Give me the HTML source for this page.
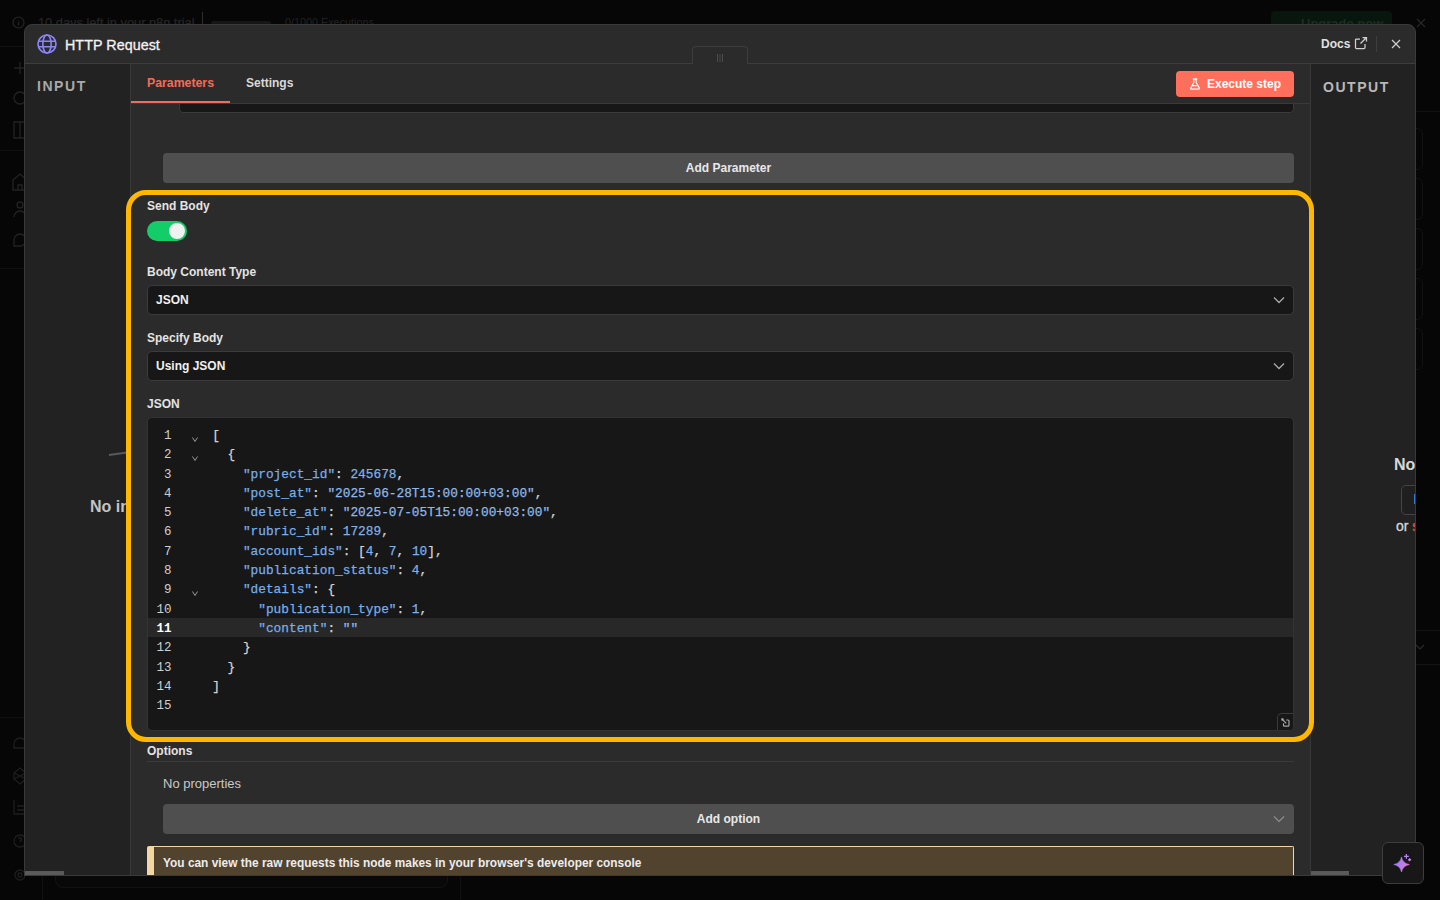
<!DOCTYPE html>
<html><head><meta charset="utf-8">
<style>
*{box-sizing:border-box;margin:0;padding:0}
html,body{width:1440px;height:900px;overflow:hidden;background:#060606;font-family:"Liberation Sans",sans-serif;color:#e8e8e8}
.a{position:absolute}
.t{position:absolute;white-space:nowrap;line-height:1}
.lbl{position:absolute;white-space:nowrap;line-height:1;font-size:12px;font-weight:bold;color:#e3e3e3}
.sel{position:absolute;background:#171717;border:1px solid #3b3b3b;border-radius:5px}
.btn{position:absolute;background:#4f4f4f;border-radius:4px}
#code{position:absolute;left:147px;top:417px;width:1147px;height:314px;background:#171717;border:1px solid #333;border-radius:5px;overflow:hidden}
.ln{position:absolute;left:0;width:23.5px;text-align:right;font-family:"Liberation Mono",monospace;font-size:12.5px;color:#cfcfcf;line-height:19.29px;white-space:pre}
.cl{position:absolute;left:64.2px;-webkit-text-stroke:0.25px currentColor;font-family:"Liberation Mono",monospace;font-size:12.8px;color:#d4d4d4;line-height:19.29px;white-space:pre}
.k{color:#78aeea}.s{color:#8fb8e8}.n{color:#7fb0e8}
.fold{position:absolute;left:44px;width:6px;height:5px}
</style></head><body>

<!-- dim background app -->
<div class="a" style="left:0;top:46px;width:25px;height:1px;background:#111"></div>
<div class="a" style="left:0;top:150px;width:25px;height:1px;background:#101010"></div>
<div class="a" style="left:0;top:268px;width:25px;height:1px;background:#0f0f0f"></div>
<div class="a" style="left:0;top:717px;width:25px;height:1px;background:#0f0f0f"></div>
<svg class="a" style="left:12px;top:16px" width="13" height="13" viewBox="0 0 13 13" fill="none" stroke="#262626" stroke-width="1.2"><circle cx="6.5" cy="6.5" r="5.5"/><path d="M6.5 6v3.5M6.5 4v.5"/></svg>
<div class="t" style="left:38px;top:17px;font-size:12.8px;color:#262626;-webkit-text-stroke:0.2px #262626">10 days left in your n8n trial</div>
<div class="a" style="left:202px;top:12px;width:1px;height:14px;background:#2e2e2e"></div>
<div class="a" style="left:211px;top:21px;width:60px;height:4px;background:#161616;border-radius:2px"></div>
<div class="t" style="left:285px;top:17px;font-size:10.8px;color:#222">0/1000 Executions</div>
<svg class="a" style="left:0;top:60px" width="25" height="200" viewBox="0 0 25 200" fill="none" stroke="#222" stroke-width="1.3"><path d="M20 2v12M14 8h12"/><circle cx="20" cy="38" r="6"/><path d="M14 62h12v16H14zM20 62v16"/><path d="M13 120l7-6 7 6v10H13zM18 130v-5h4v5"/><circle cx="20" cy="145" r="3"/><path d="M14 157a6 6 0 0 1 12 0"/><path d="M14 180a6 6 0 1 1 12 0a6 6 0 0 1-6 6h-6z"/></svg>
<svg class="a" style="left:0;top:730px" width="25" height="155" viewBox="0 0 25 155" fill="none" stroke="#1e1e1e" stroke-width="1.3"><path d="M14 14a6 6 0 1 1 12 0v4H14z"/><path d="M14 43l6-5 6 5v6l-6 5-6-5zM14 43l12 6M26 43l-12 6"/><path d="M14 70v14h12M17 76h8M17 80h8"/><circle cx="20" cy="111" r="6"/><path d="M18.5 109a1.5 1.5 0 1 1 2 1.5v1.5M20 114.5v.3"/><circle cx="20" cy="145" r="5"/><circle cx="20" cy="145" r="2"/></svg>
<div class="a" style="left:1271px;top:11px;width:121px;height:20px;background:#07170d;border-radius:4px"></div>
<div class="t" style="left:1301px;top:17px;font-size:13px;font-weight:bold;color:#17301f">Upgrade now</div>
<svg class="a" style="left:1416px;top:18px" width="10" height="10" viewBox="0 0 10 10" stroke="#262626" stroke-width="1.2"><path d="M1 1l8 8M9 1l-8 8"/></svg>
<div class="a" style="left:1416px;top:111px;width:24px;height:1px;background:#111"></div>
<div class="a" style="left:1405px;top:128px;width:18px;height:42px;border:1px solid #131313;border-radius:6px"></div>
<div class="a" style="left:1405px;top:178px;width:18px;height:42px;border:1px solid #131313;border-radius:6px"></div>
<div class="a" style="left:1405px;top:228px;width:18px;height:42px;border:1px solid #131313;border-radius:6px"></div>
<div class="a" style="left:1405px;top:278px;width:18px;height:42px;border:1px solid #131313;border-radius:6px"></div>
<div class="a" style="left:1405px;top:328px;width:18px;height:42px;border:1px solid #131313;border-radius:6px"></div>
<div class="a" style="left:1416px;top:630px;width:24px;height:1px;background:#141414"></div>
<div class="a" style="left:1416px;top:664px;width:24px;height:1px;background:#141414"></div>
<svg class="a" style="left:1415px;top:644px" width="10" height="6" viewBox="0 0 10 6" fill="none" stroke="#2a2a2a" stroke-width="1.2"><path d="M1 1l4 4 4-4"/></svg>
<div class="a" style="left:55px;top:870px;width:393px;height:18px;border:1px solid #121212;border-top:none;border-radius:0 0 8px 8px;background:#080808"></div><div class="a" style="left:42px;top:876px;width:1px;height:24px;background:#101010"></div><div class="a" style="left:460px;top:876px;width:1px;height:24px;background:#101010"></div>

<!-- modal -->
<div class="a" style="left:24px;top:24px;width:1392px;height:852px;background:#2b2b2b;border:1px solid #3a3a3a;border-radius:8px 8px 0 0"></div>
<div class="a" style="left:25px;top:63px;width:1390px;height:1px;background:#3d3d3d"></div>
<!-- header -->
<svg class="a" style="left:37px;top:34px" width="20" height="20" viewBox="0 0 20 20" fill="none" stroke="#8c85fb" stroke-width="1.6"><circle cx="10" cy="10" r="9"/><ellipse cx="10" cy="10" rx="4.2" ry="9"/><path d="M1.5 7.2h17M1.5 12.8h17"/></svg>
<div class="t" style="left:65px;top:38px;font-size:14.3px;color:#f2f2f2;-webkit-text-stroke:0.3px #f2f2f2;letter-spacing:0.05px">HTTP Request</div>
<div class="t" style="left:1321px;top:38px;font-size:12px;font-weight:bold;color:#e0e0e0">Docs</div>
<svg class="a" style="left:1354px;top:36px" width="14" height="14" viewBox="0 0 14 14" fill="none" stroke="#d0d0d0" stroke-width="1.25"><path d="M11 8v3.5a1 1 0 0 1-1 1H2.5a1 1 0 0 1-1-1V4a1 1 0 0 1 1-1H6M8.5 1.5h4v4M12.5 1.5L6.5 7.5"/></svg>
<div class="a" style="left:1376px;top:36px;width:1px;height:16px;background:#3e3e3e"></div>
<svg class="a" style="left:1391px;top:39px" width="10" height="10" viewBox="0 0 10 10" stroke="#cfcfcf" stroke-width="1.2"><path d="M1 1l8 8M9 1l-8 8"/></svg>
<div class="a" style="left:692px;top:46px;width:56px;height:18px;border:1px solid #3d3d3d;border-bottom:none;border-radius:4px 4px 0 0;background:#2b2b2b"></div>
<svg class="a" style="left:716px;top:54px" width="8" height="8" viewBox="0 0 8 8" stroke="#4c4c4c" stroke-width="1"><path d="M1.5 0v8M4 0v8M6.5 0v8"/></svg>

<!-- input panel -->
<div class="a" style="left:25px;top:64px;width:105px;height:811px;background:#222"></div>
<div class="t" style="left:37px;top:79px;font-size:14px;font-weight:bold;letter-spacing:1.55px;color:#a9a9a9">INPUT</div>
<div class="t" style="left:90px;top:499px;font-size:16px;font-weight:bold;color:#c4c4c4">No input</div>
<div class="a" style="left:109px;top:454px;width:22px;height:2px;background:#565a63;transform:rotate(-8deg);transform-origin:0 50%"></div>

<!-- output panel -->
<div class="a" style="left:1310px;top:64px;width:105px;height:811px;background:#222;border-left:1px solid #383838"></div>
<div class="t" style="left:1323px;top:80px;font-size:14px;font-weight:bold;letter-spacing:1.55px;color:#b8b8b8">OUTPUT</div>
<div class="a" style="left:1310px;top:64px;width:105px;height:811px;overflow:hidden">
  <div class="t" style="left:84px;top:393px;font-size:16px;font-weight:bold;color:#d8d8d8">No input data</div>
  <div class="a" style="left:91px;top:421px;width:40px;height:30px;border:1px solid #444;border-radius:5px;background:#1f1f1f"></div>
  <div class="a" style="left:104px;top:430px;width:2px;height:10px;background:#2a7fd1"></div>
  <div class="t" style="left:86px;top:455px;font-size:14px;color:#d8d8d8;-webkit-text-stroke:0.3px #d8d8d8">or <span style="color:#e8553f;-webkit-text-stroke:0.3px #e8553f">set mock data</span></div>
</div>
<div class="a" style="left:1311px;top:871px;width:38px;height:4px;background:#5a5a5a"></div>
<div class="a" style="left:25px;top:871px;width:39px;height:4px;background:#5a5a5a"></div>

<!-- main panel -->
<div class="a" style="left:130px;top:64px;width:1180px;height:811px;background:#2b2b2b;border-left:1px solid #383838;overflow:hidden">
</div>
<div id="mainc" class="a" style="left:131px;top:64px;width:1179px;height:811px;overflow:hidden">
  <!-- tabs -->
  <div class="t" style="left:16px;top:13px;font-size:12.3px;font-weight:bold;color:#f56b58">Parameters</div>
  <div class="t" style="left:115px;top:13px;font-size:12px;font-weight:bold;color:#d9d9d9">Settings</div>
  <div class="a" style="left:0;top:39px;width:1179px;height:1px;background:#3a3a3a"></div>
  <div class="a" style="left:0;top:37px;width:99px;height:2px;background:#f56b58"></div>
  <div class="a" style="left:1045px;top:7px;width:118px;height:26px;background:#ff6f5c;border-radius:4px"></div>
  <svg class="a" style="left:1058px;top:13px" width="12" height="13" viewBox="0 0 12 13" fill="none" stroke="#fff" stroke-width="1.1"><path d="M3.8 2.1h4.4" stroke-width="1.6"/><path d="M4.8 2.5v3L1.7 10.9a0.8 0.8 0 0 0 .7 1.2h7.2a0.8 0.8 0 0 0 .7-1.2L7.2 5.5v-3M3 8.6h6"/></svg>
  <div class="t" style="left:1076px;top:14px;font-size:12px;font-weight:bold;color:#fff">Execute step</div>
  <!-- partial input at top -->
  <div class="a" style="left:48px;top:20px;width:1115px;height:29px;background:#171717;border:1px solid #3b3b3b;border-radius:4px;clip-path:inset(20px 0 0 0)"></div>
  <!-- Add parameter -->
  <div class="btn" style="left:32px;top:89px;width:1131px;height:30px"></div>
  <div class="t" style="left:32px;top:98px;width:1131px;text-align:center;font-size:12px;font-weight:bold;color:#e8e8e8">Add Parameter</div>
</div>

<!-- highlighted section -->
<div class="lbl" style="left:147px;top:200px">Send Body</div>
<div class="a" style="left:147px;top:221px;width:40px;height:20px;border-radius:10px;background:#13cd69"></div>
<div class="a" style="left:169px;top:223px;width:16px;height:16px;border-radius:8px;background:#f1f1f1"></div>

<div class="lbl" style="left:147px;top:266px">Body Content Type</div>
<div class="sel" style="left:147px;top:285px;width:1147px;height:30px"></div>
<div class="t" style="left:156px;top:294px;font-size:12px;font-weight:bold;color:#f0f0f0">JSON</div>
<svg class="a" style="left:1273px;top:296px" width="12" height="8" viewBox="0 0 12 8" fill="none" stroke="#aaa" stroke-width="1.3"><path d="M1 1.5l5 5 5-5"/></svg>

<div class="lbl" style="left:147px;top:332px">Specify Body</div>
<div class="sel" style="left:147px;top:351px;width:1147px;height:30px"></div>
<div class="t" style="left:156px;top:360px;font-size:12px;font-weight:bold;color:#f0f0f0">Using JSON</div>
<svg class="a" style="left:1273px;top:362px" width="12" height="8" viewBox="0 0 12 8" fill="none" stroke="#aaa" stroke-width="1.3"><path d="M1 1.5l5 5 5-5"/></svg>

<div class="lbl" style="left:147px;top:398px">JSON</div>
<div id="code">
  <div class="a" style="left:0;top:200px;width:1147px;height:19px;background:#282828"></div>
  <div class="ln" style="top:9px">1
2
3
4
5
6
7
8
9
10
<b style="color:#fff">11</b>
12
13
14
15</div>
  <svg class="fold" style="top:19px" viewBox="0 0 6 5" fill="none" stroke="#999" stroke-width="1"><path d="M0.5 0.5l2.5 4 2.5-4"/></svg>
  <svg class="fold" style="top:38px" viewBox="0 0 6 5" fill="none" stroke="#999" stroke-width="1"><path d="M0.5 0.5l2.5 4 2.5-4"/></svg>
  <svg class="fold" style="top:173px" viewBox="0 0 6 5" fill="none" stroke="#999" stroke-width="1"><path d="M0.5 0.5l2.5 4 2.5-4"/></svg>
  <div class="cl" style="top:8px">[
  {
    <span class="k">"project_id"</span>: <span class="n">245678</span>,
    <span class="k">"post_at"</span>: <span class="s">"2025-06-28T15:00:00+03:00"</span>,
    <span class="k">"delete_at"</span>: <span class="s">"2025-07-05T15:00:00+03:00"</span>,
    <span class="k">"rubric_id"</span>: <span class="n">17289</span>,
    <span class="k">"account_ids"</span>: [<span class="n">4</span>, <span class="n">7</span>, <span class="n">10</span>],
    <span class="k">"publication_status"</span>: <span class="n">4</span>,
    <span class="k">"details"</span>: {
      <span class="k">"publication_type"</span>: <span class="n">1</span>,
      <span class="k">"content"</span>: <span class="s">""</span>
    }
  }
]
</div>
  <div class="a" style="left:1129px;top:295px;width:18px;height:19px;border:1px solid #3a3a3a;border-right:none;border-bottom:none;border-radius:5px 0 0 0;background:#171717"></div><svg class="a" style="left:1132px;top:298px" width="12" height="12" viewBox="0 0 12 12" fill="none" stroke="#a8a8a8" stroke-width="1.2"><path d="M6.2 4h1.8a1 1 0 0 1 1 1v4.2a1 1 0 0 1-1 1H4.5a1 1 0 0 1-1-1V7.3"/><path d="M2 3l4.2 4.3"/><path d="M1.2 2.2l3 .6-2.4 2.4z" fill="#b0b0b0" stroke="none"/></svg>
</div>

<!-- yellow highlight -->
<div class="a" style="left:126px;top:190px;width:1188px;height:552px;border:5px solid #ffb700;border-radius:20px"></div>

<!-- options -->
<div class="lbl" style="left:147px;top:745px">Options</div>
<div class="a" style="left:147px;top:761px;width:1147px;height:1px;background:#3b3b3b"></div>
<div class="t" style="left:163px;top:777px;font-size:13px;color:#c9c9c9">No properties</div>
<div class="btn" style="left:163px;top:804px;width:1131px;height:30px"></div>
<div class="t" style="left:163px;top:813px;width:1131px;text-align:center;font-size:12px;font-weight:bold;color:#e8e8e8">Add option</div>
<svg class="a" style="left:1273px;top:815px" width="12" height="8" viewBox="0 0 12 8" fill="none" stroke="#8e8e8e" stroke-width="1.2"><path d="M1 1.5l5 5 5-5"/></svg>
<div class="a" style="left:147px;top:846px;width:1147px;height:29px;background:#52432f;border:1px solid #f3d6a2;border-left:7px solid #f3d6a2;border-bottom:none;border-radius:2px 2px 0 0"></div>
<div class="t" style="left:163px;top:858px;font-size:11.9px;font-weight:bold;color:#ececec">You can view the raw requests this node makes in your browser's developer console</div>
<div class="a" style="left:24px;top:875px;width:1392px;height:1px;background:#3a3a3a"></div>

<!-- AI button -->
<div class="a" style="left:1382px;top:842px;width:42px;height:42px;background:#171717;border:1px solid #3d3d3d;border-radius:6px"></div>
<svg class="a" style="left:1392px;top:853px" width="22" height="22" viewBox="0 0 22 22"><defs><linearGradient id="g" x1="0" y1="0" x2="1" y2="0.6"><stop offset="0" stop-color="#8a7df8"/><stop offset="0.6" stop-color="#b57ee8"/><stop offset="1" stop-color="#ea7cc4"/></linearGradient></defs><path d="M9.5 3.9Q10.7 10.3 17.3 11.5Q10.7 12.7 9.5 19Q8.3 12.7 1.8 11.5Q8.3 10.3 9.5 3.9Z" fill="url(#g)" stroke="url(#g)" stroke-width="0.6" stroke-linejoin="round"/><path d="M14.4 1v4.8M12 3.4h4.8" stroke="#b48af2" stroke-width="1.2"/><path d="M17.6 5l1.8 1.8-1.8 1.8-1.8-1.8z" fill="#d77fd4"/></svg>

</body></html>
